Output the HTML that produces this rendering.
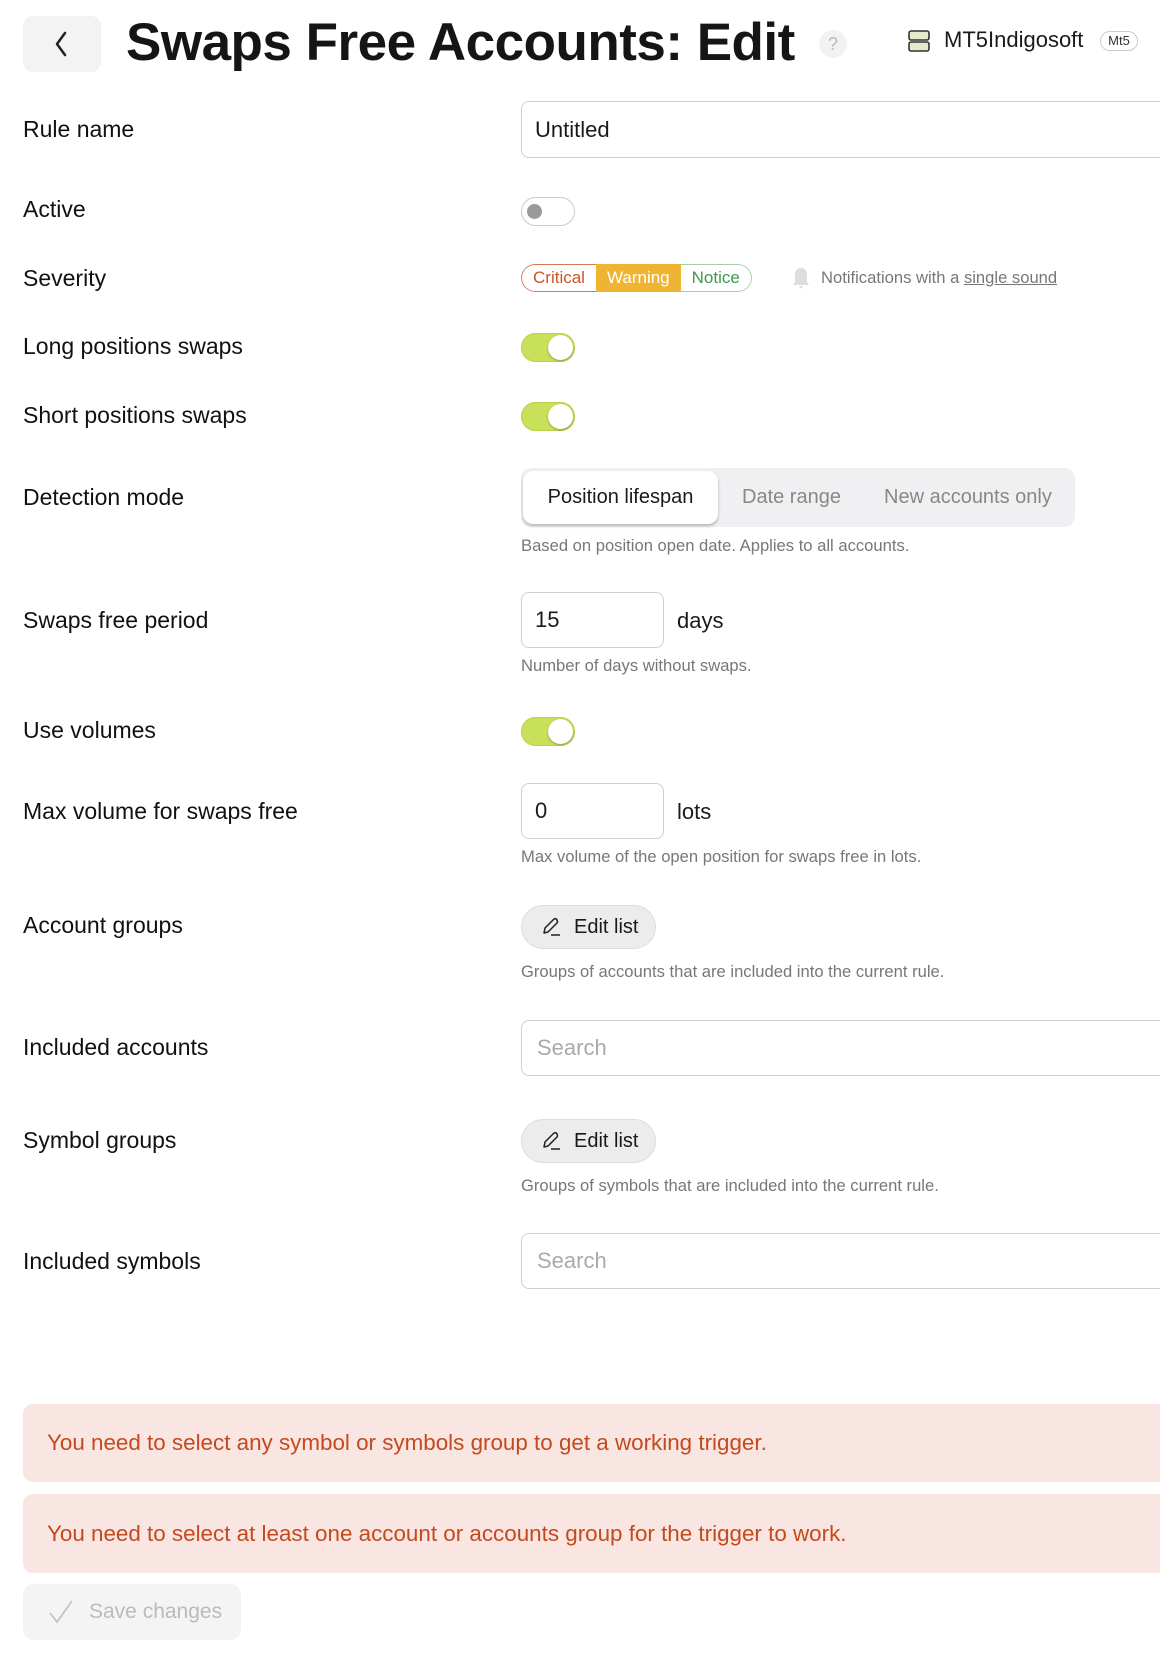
<!DOCTYPE html>
<html><head><meta charset="utf-8"><style>
*{box-sizing:border-box;margin:0;padding:0}
body{width:1160px;height:1658px;background:#fff;font-family:"Liberation Sans",sans-serif;color:#1a1a1a;position:relative;overflow:hidden}
.a{position:absolute}
.lbl{position:absolute;left:23px;font-size:23px;color:#111;transform:translateY(-52%)}
.inp{position:absolute;left:521px;border:1px solid #cfcfcf;border-radius:8px;background:#fff;font-size:22px;padding-left:13px;display:flex;align-items:center}
.help{position:absolute;left:521px;font-size:16.6px;color:#777}
.tog{position:absolute;left:521px;width:54px;height:29px;border-radius:15px}
.tog.on{background:#c9e05a;box-shadow:inset 0 0 0 1px #b9d04a}
.tog.on::after{content:"";position:absolute;right:2px;top:2px;width:25px;height:25px;border-radius:50%;background:#fff;box-shadow:0 1px 2px rgba(0,0,0,.3)}
.btn{position:absolute;left:521px;width:135px;height:44px;border-radius:22px;background:#ececec;border:1px solid #ddd;font-size:20px;display:flex;align-items:center;padding-left:18px;gap:12px}
.alert{position:absolute;left:23px;width:1160px;background:#f9e6e2;border-radius:10px;color:#c44a1d;font-size:22.4px;padding-left:24px;display:flex;align-items:center}
</style></head><body>
<div class="a" style="left:23px;top:16px;width:78px;height:56px;background:#f3f3f3;border-radius:10px"></div>
<svg class="a" style="left:48px;top:28px" width="28" height="32" viewBox="0 0 28 32"><path d="M17 5 L9 16 L17 27" fill="none" stroke="#222" stroke-width="2.5" stroke-linecap="round" stroke-linejoin="round"/></svg>
<div class="a" style="left:126px;top:12px;font-size:53px;font-weight:bold;letter-spacing:-0.5px;color:#151515">Swaps Free Accounts: Edit</div>
<div class="a" style="left:819px;top:30px;width:28px;height:28px;border-radius:50%;background:#f2f2f2;color:#bbb;font-size:18px;text-align:center;line-height:28px">?</div>
<svg class="a" style="left:907px;top:29px" width="24" height="24" viewBox="0 0 24 24"><rect x="2" y="2" width="20" height="9" rx="2" fill="#e6eacb" stroke="#333" stroke-width="1.6"/><rect x="2" y="13" width="20" height="9" rx="2" fill="#e6eacb" stroke="#333" stroke-width="1.6"/></svg>
<div class="a" style="left:944px;top:27px;font-size:22px;color:#1a1a1a">MT5Indigosoft</div>
<div class="a" style="left:1100px;top:31px;width:38px;height:20px;border:1px solid #ccc;border-radius:10px;font-size:13px;text-align:center;line-height:18px;color:#333">Mt5</div>

<div class="lbl" style="top:130px">Rule name</div>
<div class="inp" style="top:101px;width:700px;height:57px">Untitled</div>

<div class="lbl" style="top:210px">Active</div>
<div class="tog" style="top:197px;border:1.5px solid #ccc;background:#fff"><div style="position:absolute;left:5px;top:6px;width:15px;height:15px;border-radius:50%;background:#9a9a9a"></div></div>

<div class="lbl" style="top:279px">Severity</div>
<div class="a" style="left:521px;top:264px;height:28px;display:flex;font-size:17px;border-radius:14px;overflow:hidden">
<div style="border:1px solid #d8774f;border-right:none;border-radius:14px 0 0 14px;color:#c9552a;padding:0 11px;line-height:26px">Critical</div>
<div style="background:#f0b434;color:#fff;padding:0 11px;line-height:28px">Warning</div>
<div style="border:1px solid #9fd3a6;border-left:none;border-radius:0 14px 14px 0;color:#3c9a4c;padding:0 11px;line-height:26px">Notice</div>
</div>
<svg class="a" style="left:791px;top:266px" width="20" height="24" viewBox="0 0 20 24"><path d="M10 2 C5 2 4 6 4 10 L4 16 L2 19 L18 19 L16 16 L16 10 C16 6 15 2 10 2Z M8 20 L12 20 L10 23Z" fill="#ddd"/></svg>
<div class="a" style="left:821px;top:268px;font-size:16.6px;color:#777">Notifications with a <span style="text-decoration:underline">single sound</span></div>

<div class="lbl" style="top:347px">Long positions swaps</div>
<div class="tog on" style="top:333px"></div>
<div class="lbl" style="top:416px">Short positions swaps</div>
<div class="tog on" style="top:402px"></div>

<div class="lbl" style="top:498px">Detection mode</div>
<div class="a" style="left:521px;top:468px;width:554px;height:59px;background:#f0f0f2;border-radius:10px"></div>
<div class="a" style="left:523px;top:471px;width:195px;height:53px;background:#fff;border-radius:10px;box-shadow:0 2px 3px rgba(0,0,0,.25);font-size:20px;text-align:center;line-height:53px;color:#1a1a1a">Position lifespan</div>
<div class="a" style="left:742px;top:486px;font-size:20px;color:#888">Date range</div>
<div class="a" style="left:884px;top:486px;font-size:20px;color:#888">New accounts only</div>
<div class="help" style="top:536px">Based on position open date. Applies to all accounts.</div>

<div class="lbl" style="top:621px">Swaps free period</div>
<div class="inp" style="top:592px;width:143px;height:56px">15</div>
<div class="a" style="left:677px;top:608px;font-size:22px">days</div>
<div class="help" style="top:656px">Number of days without swaps.</div>

<div class="lbl" style="top:731px">Use volumes</div>
<div class="tog on" style="top:717px"></div>

<div class="lbl" style="top:812px">Max volume for swaps free</div>
<div class="inp" style="top:783px;width:143px;height:56px">0</div>
<div class="a" style="left:677px;top:799px;font-size:22px">lots</div>
<div class="help" style="top:847px">Max volume of the open position for swaps free in lots.</div>

<div class="lbl" style="top:926px">Account groups</div>
<div class="btn" style="top:905px"><svg width="22" height="22" viewBox="0 0 22 22"><path d="M4 17 L5 12 L14 3 Q16 2 17 4 Q18 6 17 7 L8 16 Z M11 19 L20 19" fill="none" stroke="#222" stroke-width="1.5" stroke-linejoin="round"/></svg>Edit list</div>
<div class="help" style="top:962px">Groups of accounts that are included into the current rule.</div>

<div class="lbl" style="top:1048px">Included accounts</div>
<div class="inp" style="top:1020px;width:700px;height:56px;color:#aaa;padding-left:15px">Search</div>

<div class="lbl" style="top:1141px">Symbol groups</div>
<div class="btn" style="top:1119px"><svg width="22" height="22" viewBox="0 0 22 22"><path d="M4 17 L5 12 L14 3 Q16 2 17 4 Q18 6 17 7 L8 16 Z M11 19 L20 19" fill="none" stroke="#222" stroke-width="1.5" stroke-linejoin="round"/></svg>Edit list</div>
<div class="help" style="top:1176px">Groups of symbols that are included into the current rule.</div>

<div class="lbl" style="top:1262px">Included symbols</div>
<div class="inp" style="top:1233px;width:700px;height:56px;color:#aaa;padding-left:15px">Search</div>

<div class="alert" style="top:1404px;height:78px">You need to select any symbol or symbols group to get a working trigger.</div>
<div class="alert" style="top:1494px;height:79px">You need to select at least one account or accounts group for the trigger to work.</div>

<div class="a" style="left:23px;top:1584px;width:218px;height:56px;background:#f4f4f4;border-radius:10px;display:flex;align-items:center;padding-left:24px;gap:14px;color:#bbb;font-size:21px"><svg width="28" height="28" viewBox="0 0 28 28"><path d="M3 15 L10 24 L25 3" fill="none" stroke="#c4c4c4" stroke-width="1.8"/></svg>Save changes</div>
</body></html>
